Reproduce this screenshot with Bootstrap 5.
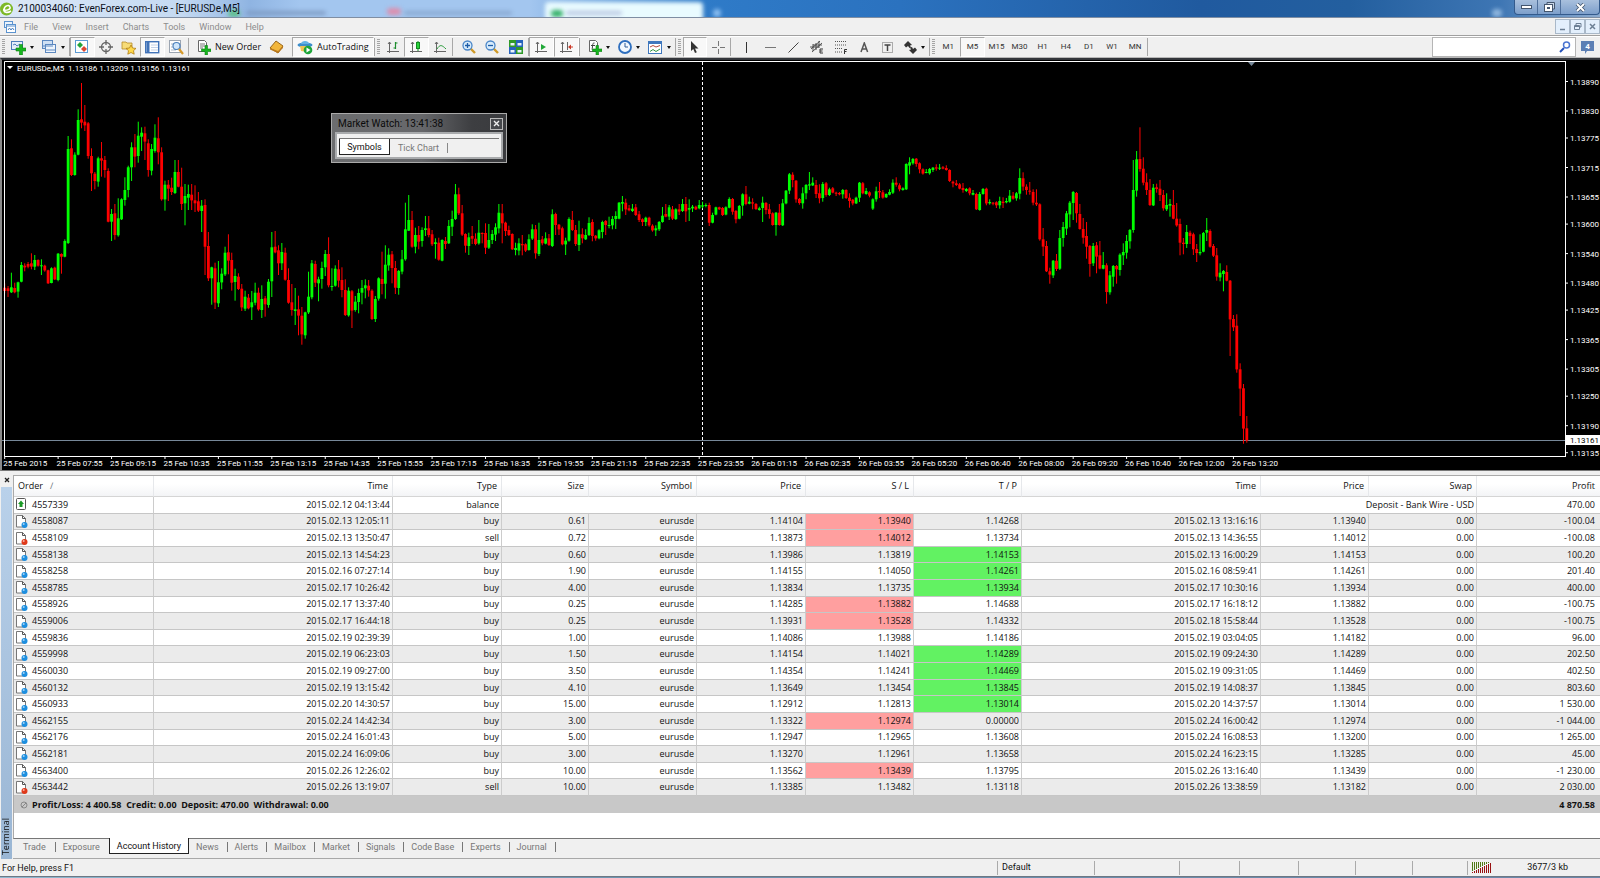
<!DOCTYPE html>
<html lang="en">
<head>
<meta charset="utf-8">
<meta name="viewport" content="width=device-width, initial-scale=1">
<title>2100034060: EvenForex.com-Live - [EURUSDe,M5]</title>
<link href="https://cdn.jsdelivr.net/npm/bootstrap@5.3.0/dist/css/bootstrap.min.css" rel="stylesheet">
<script src="https://cdn.jsdelivr.net/npm/bootstrap@5.3.0/dist/js/bootstrap.bundle.min.js"></script>
<style>
  :root { --ui: Roboto, "Open Sans", sans-serif; --data: "Open Sans", "Noto Sans", sans-serif; }
  body { font: 9px/12px var(--ui); color: #111; background: #f0f0f0; }
  button, input { font: inherit; color: inherit; border: 0; background: none; padding: 0; }
  svg { display: block; flex: none; }

  /* window caption */
  .caption-bar { height: 18px; overflow: hidden; border-bottom: 1px solid #7f8ea3;
    background: linear-gradient(90deg, #dbe8f7 0, #c5daf2 180px, #8fb4e2 250px, #a3c6ef 300px, #a3c6ef 530px, #2f7bc8 700px, #2b72bf 900px, #205a9f 1200px, #235f9f 1350px, #3e76b4 1500px, #8cabd0 1600px); }
  .caption-text { font: 10px/17px var(--ui); color: #0a0f18; }
  .glass-tab { top: 2px; height: 20px; border-radius: 4px; filter: blur(2px); }
  .win-btns { height: 15px; border: 1px solid #335a8c; border-top: 0; border-radius: 0 0 4px 4px; background: linear-gradient(#a9c0dd, #7d9fcb); }
  .win-btns button { width: 23px; border-right: 1px solid #50709c; }
  .win-btns button:last-child { width: 38px; border-right: 0; }

  /* menu */
  .menu-bar { height: 18px; border-bottom: 1px solid #a0a0a0; }
  .menu-items { gap: 14px; }
  .menu-bar a { color: #8c8c8c; text-decoration: none; }
  .mdi-btn { width: 15px; height: 15px; border: 1px solid #a9b8c8; background: #e3effc; }

  /* tool bar */
  .tool-bar { height: 22px; border-top: 1px solid #fff; border-bottom: 1px solid #b8b8b8; font-family: var(--data); }
  .grip { width: 3px; height: 16px; margin: 0 2px; background: repeating-linear-gradient(#a5a5a5 0 1px, transparent 1px 2px); }
  .rule { width: 1px; height: 18px; background: #a8a8a8; }
  .tool-bar button { height: 20px; display: flex; align-items: center; justify-content: center; }
  .tool-bar .pressed { background: #f8f8f8; border: 1px solid #fff; border-left-color: #a8a8a8; border-top-color: #a8a8a8; }
  .tools > button { flex: 1 1 0; }
  .drop::after { content: ""; border: 2px solid transparent; border-top: 3px solid #111; border-bottom: 0; margin-left: 4px; }
  .periods { width: 210px; font: 8px/12px var(--ui); color: #333; }
  .search-box { width: 144px; height: 20px; background: #fff; border: 1px solid #b5b5b5; }
  .search-box input { outline: 0; min-width: 0; }
  .msg-count { font: bold 8px/9px var(--ui); fill: #fff; }

  /* chart */
  .chart-pane { background: #000; height: 413px; border-top: 2px solid #33363b; border-bottom: 1px solid #777; border-left: 2px solid #8a8a8a; }
  .plot text, .scale-y text { font: 8px var(--ui); fill: #fff; }
  .plot { flex: 1 1 0; min-width: 0; height: 410px; }
  .scale-y { width: 35px; height: 410px; }
  .watch { left: 329px; top: 53px; width: 176px; height: 50px; border: 1px solid #aaa; background: linear-gradient(90deg, #6c6d6f 0, #66676a 90px, #3d3e41 140px, #3a3b3e); padding: 1px 3px 3px; }
  .watch-title { height: 17px; font: 10px/16px var(--ui); color: #0b0b0b; padding-left: 3px; }
  .watch-close { width: 13px; height: 12px; border: 1px solid #bbb; background: #46484c; }
  .watch-body { height: 27px; border: 2px solid #a9abad; background: #f0f0f0; padding: 2px; }
  .watch-tabs { border-top: 1px solid #777; margin-top: 2px; }
  .watch-tabs .on { border: 1px solid #222; border-top: 0; background: #fff; width: 51px; height: 16px; }
  .watch-tabs .off { color: #777; border-right: 1px solid #888; height: 10px; line-height: 10px; }

  /* terminal */
  .side { flex: 0 0 13px; }
  .side-strip { width: 11px; background: linear-gradient(#b9d1ea, #9ab6d4); }
  .side-strip span { writing-mode: vertical-rl; transform: rotate(180deg); font: 9px/10px var(--data); }
  .history { table-layout: fixed; height: 338px; border-collapse: separate; border-spacing: 0; font: 9px/12px var(--data); background: #fff; border-left: 1px solid #aaa; border-top: 1px solid #aaa; }
  .history th { font-weight: 400; text-align: right; height: 21px; padding: 0 4px; background: linear-gradient(#fff 40%, #f3f4f6); border-right: 1px solid #e6e8eb; border-bottom: 1px solid #d5d5d5; }
  .history th:first-child, .history td:first-child { text-align: left; }
  .history td { text-align: right; padding: 0 2px; border-right: 1px solid #ccc; border-bottom: 1px solid #c6c6c6; white-space: nowrap; }
  .history td:last-child, .history th:last-child { border-right: 0; padding-right: 5px; }
  .history tbody tr:nth-child(even) { background: #ebebeb; }
  .history td.loss { background: #ff9f9f; }
  .history td.gain { background: #62f262; }
  .history tfoot td { height: 17px; background: #c8c8c8; font-weight: 700; border-right: 0; border-bottom: 0; }
  .blank { height: 26px; background: #fff; border-left: 1px solid #aaa; border-bottom: 1px solid #777; }
  .term-tabs { height: 20px; padding-left: 3px; border-bottom: 1px solid #a8a8a8; }
  .term-tabs button { color: #777; height: 10px; line-height: 10px; border-right: 1px solid #777; padding: 0 9px 0 7px; margin-top: 3px; }
  .term-tabs button.on { color: #111; background: #fff; height: 16px; line-height: 16px; margin: -1px 0 0 -1px; padding: 0 7px; border: 1px solid #222; border-top: 0; }
  .term-tabs button.on ~ button { padding-right: 8px; }
  .state-bar { height: 18px; border-bottom: 1px solid #6d7884; }
  .state-bar > div { border-left: 1px solid #aaa; height: 14px; line-height: 13px; }
  .state-text { padding-left: 2px; }
  .desk { flex: 1 0 1px; background: linear-gradient(90deg, #8fb8cf, #6e93ae 40%, #6c86a8); }
</style>
</head>
<body class="min-vh-100 d-flex flex-column overflow-hidden">

<header class="caption-bar d-flex align-items-start position-relative">
  <div class="glass-tab position-absolute" style="left:545px;width:158px;background:#e9fbff"></div>
  <div class="glass-tab position-absolute" style="left:551px;width:12px;top:10px;height:7px;background:#35b06a"></div>
  <div class="glass-tab position-absolute" style="left:566px;width:56px;top:11px;height:4px;background:#b9c6e2"></div>
  <div class="glass-tab position-absolute" style="left:387px;width:14px;top:8px;height:7px;background:#dd8fae"></div>
  <div class="glass-tab position-absolute" style="left:404px;width:108px;top:11px;height:4px;background:#8aa8d0"></div>
  <div class="glass-tab position-absolute" style="left:228px;width:12px;top:10px;height:7px;background:#5fc08c"></div>
  <div class="glass-tab position-absolute" style="left:246px;width:80px;top:11px;height:4px;background:#7f9cc4"></div>
  <div class="glass-tab position-absolute" style="left:713px;width:8px;top:9px;height:8px;background:#8ec0f2"></div>
  <div class="glass-tab position-absolute" style="left:1492px;width:10px;top:9px;height:8px;background:#8fb6de"></div>
  <svg class="position-relative" width="14" height="17" viewBox="0 0 14 17"><circle cx="6.500" cy="9" r="6.500" fill="#7db928"/><path d="M3 10c4 1 8-1 7-3-1-3-6-1-6 3 0 3 4 3 7 1" fill="none" stroke="#fff" stroke-width="1.6"/></svg>
  <div class="caption-text position-relative ps-1 me-auto">2100034060: EvenForex.com-Live - [EURUSDe,M5]</div>
  <div class="win-btns d-flex position-relative">
    <button class="d-flex justify-content-center align-items-center" aria-label="Minimize"><svg width="11" height="5" viewBox="0 0 11 5"><rect x=".5" y=".5" width="10" height="3" fill="#fff" stroke="#44566e"/></svg></button>
    <button class="d-flex justify-content-center align-items-center" aria-label="Restore"><svg width="11" height="10" viewBox="0 0 11 10"><path d="M3 .5h7.500v6.500H3z" fill="#c9d5e5" stroke="#44566e"/><rect x=".5" y="2.500" width="8" height="7" fill="#fff" stroke="#44566e"/><rect x="3" y="5" width="3" height="2" fill="#44566e"/></svg></button>
    <button class="d-flex justify-content-center align-items-center" aria-label="Close"><svg width="11" height="9" viewBox="0 0 11 9"><path d="M2 1l7 7M9 1L2 8" stroke="#44566e" stroke-width="3.600"/><path d="M2 1l7 7M9 1L2 8" stroke="#fff" stroke-width="2"/></svg></button>
  </div>
</header>

<nav class="menu-bar d-flex align-items-center">
  <svg class="ms-1 me-2" width="12" height="12" viewBox="0 0 12 12"><rect x=".5" y=".5" width="8" height="6" fill="#eaf3fc" stroke="#5b93cf"/><rect x="2.500" y="3.500" width="9" height="8" fill="#fff" stroke="#5b93cf"/><path d="M3 5h8" stroke="#5b93cf"/><path d="M4 9l1.500-2L7 9l1.500-2L10 9" fill="none" stroke="#4880c0"/></svg>
  <div class="menu-items d-flex me-auto">
    <a href="#">File</a><a href="#">View</a><a href="#">Insert</a><a href="#">Charts</a><a href="#">Tools</a><a href="#">Window</a><a href="#">Help</a>
  </div>
  <button class="mdi-btn" aria-label="Minimize chart"><svg width="13" height="13" viewBox="0 0 13 13"><path d="M4 9.500h5" stroke="#6c7f94" stroke-width="1.500"/></svg></button>
  <button class="mdi-btn" aria-label="Restore chart"><svg width="13" height="13" viewBox="0 0 13 13"><path d="M5 5V3.500h5V7H8.500M3.500 5.500h5v4h-5zM3.500 6.500h5" fill="none" stroke="#6c7f94"/></svg></button>
  <button class="mdi-btn" aria-label="Close chart"><svg width="13" height="13" viewBox="0 0 13 13"><path d="M4 4l5 5M9 4L4 9" stroke="#6c7f94" stroke-width="1.500"/></svg></button>
</nav>

<div class="tool-bar d-flex align-items-center" id="toolbar">
  <i class="grip"></i>
  <div class="tools d-flex" style="width:62px">
    <button class="drop" aria-label="New chart"><svg width="15" height="15" viewBox="0 0 15 15"><rect x=".5" y="1.500" width="11" height="8" fill="#e4eefa" stroke="#4b7dbb"/><path d="M2 5l2-1 2 2 3-2" stroke="#4b7dbb" fill="none"/><path d="M8.500 4.500h3v3.500H15v3h-3.500V15h-3v-4H5V8h3.500z" fill="#17b51f" stroke="#0d8115" stroke-width=".6"/></svg></button>
    <button class="drop" aria-label="Profiles"><svg width="15" height="14" viewBox="0 0 15 14"><rect x=".5" y=".5" width="10" height="8" fill="#cfe0f4" stroke="#5c88c0"/><rect x="3.500" y="4.500" width="10" height="8" fill="#eef5fd" stroke="#5c88c0"/><path d="M1 6h10M4 10h9" stroke="#5c88c0"/></svg></button>
  </div>
  <i class="rule"></i>
  <div class="tools d-flex" style="width:118px">
    <button class="pressed" aria-label="Market Watch"><svg width="14" height="14" viewBox="0 0 14 14"><rect x=".5" y=".5" width="12" height="12" fill="#fff" stroke="#5b9bd5"/><path d="M2 5l3-3 3 3-3 3z" fill="#22a33a"/><path d="M6 9l3-3 3 3-3 3z" fill="#dd4630"/></svg></button>
    <button aria-label="Data Window"><svg width="14" height="14" viewBox="0 0 14 14"><circle cx="7" cy="7" r="4.500" fill="none" stroke="#666" stroke-width="1.300"/><path d="M7 0v5M7 9v5M0 7h5M9 7h5" stroke="#666" stroke-width="1.300"/></svg></button>
    <button aria-label="Navigator"><svg width="16" height="15" viewBox="0 0 16 15"><path d="M1 2h4l1 1h5v6H1z" fill="#f7dc78" stroke="#b58a2a" stroke-width=".8"/><path d="M10 5l1.500 3 3.500.4-2.500 2.300.7 3.500L10 12.500l-3.200 1.700.7-3.500L5 8.400 8.500 8z" fill="#ffd94a" stroke="#b07d12" stroke-width=".8"/></svg></button>
    <button class="pressed" aria-label="Terminal"><svg width="15" height="13" viewBox="0 0 15 13"><rect x=".7" y=".7" width="13" height="11" fill="#fff" stroke="#4173b8" stroke-width="1.400"/><path d="M1.500 1h3v10.500h-3z" fill="#4173b8"/><path d="M6 4h7M6 6.500h7M6 9h7" stroke="#c3d2e8"/></svg></button>
    <button aria-label="Strategy Tester"><svg width="15" height="15" viewBox="0 0 15 15"><rect x=".5" y=".5" width="11" height="12" fill="#fff" stroke="#9ba5b2"/><path d="M2 4h8M2 7h8M2 10h5" stroke="#a9b6c6"/><circle cx="7.500" cy="6" r="3.500" fill="#cfe6fb" stroke="#4d82be" stroke-width="1.200"/><path d="M10 9l4 5" stroke="#d69a2a" stroke-width="2.200"/></svg></button>
  </div>
  <i class="rule me-1"></i>
  <button class="px-1" aria-label="New Order"><svg class="me-1" width="14" height="15" viewBox="0 0 14 15"><path d="M1.500.5h6l2 2v9h-8z" fill="#fff" stroke="#666"/><path d="M3 4h5M3 6h5M3 8h3" stroke="#777"/><path d="M8 5.500h2.500V9H14v2.500h-3.500V15H8v-3.500H4.500V9H8z" fill="#17b51f" stroke="#0d8115" stroke-width=".6"/></svg>New Order</button>
  <button class="px-1" aria-label="MetaEditor"><svg width="15" height="14" viewBox="0 0 15 14"><path d="M1 8l6-7 7 5-5 7z" fill="#f2b63c" stroke="#97661b"/><path d="M1 8l8 3 5-5v2l-5 5-8-3.500z" fill="#b9791e"/></svg></button>
  <button class="pressed px-1 ms-1"><svg class="me-1" width="16" height="15" viewBox="0 0 16 15"><ellipse cx="8" cy="5" rx="7.500" ry="2.500" fill="#3d8ecb"/><path d="M4 4c0-4 8-4 8 0z" fill="#63b1e4"/><path d="M3 6h9l-2 6-6-1z" fill="#efc354"/><circle cx="11" cy="10" r="4.300" fill="#1ea63a"/><path d="M9.500 7.500l4 2.500-4 2.500z" fill="#fff"/></svg>AutoTrading</button>
  <i class="rule"></i><i class="grip"></i>
  <div class="tools d-flex" style="width:70px">
    <button aria-label="Bar chart"><svg width="13" height="13" viewBox="0 0 13 13"><path d="M2.500 1v11M0 10.500h12M1 3l1.500-2L4 3" stroke="#666" fill="none"/><path d="M8.500 1v7M8.500 2h2M6.500 7h2" stroke="#1c8c2c" stroke-width="1.200"/></svg></button>
    <button class="pressed" aria-label="Candlesticks"><svg width="13" height="13" viewBox="0 0 13 13"><path d="M2.500 1v11M0 10.500h12M1 3l1.500-2L4 3" stroke="#666" fill="none"/><path d="M8 0v10" stroke="#138a22"/><rect x="6.500" y="1.500" width="3" height="6" fill="#28d53a" stroke="#138a22"/></svg></button>
    <button aria-label="Line chart"><svg width="13" height="13" viewBox="0 0 13 13"><path d="M2.500 1v11M0 10.500h12M1 3l1.500-2L4 3" stroke="#666" fill="none"/><path d="M3 8c3-5 5-4 9 0" stroke="#2b9c3c" fill="none"/></svg></button>
  </div>
  <i class="rule"></i>
  <div class="tools d-flex ms-1" style="width:71px">
    <button aria-label="Zoom in"><svg width="14" height="14" viewBox="0 0 14 14"><path d="M8 8l5 5" stroke="#cf9a28" stroke-width="2.400"/><circle cx="5.500" cy="5.500" r="4.500" fill="#d8ecfc" stroke="#4a86c8" stroke-width="1.300"/><path d="M3 5.500h5M5.500 3v5" stroke="#1d5da8" stroke-width="1.300"/></svg></button>
    <button aria-label="Zoom out"><svg width="14" height="14" viewBox="0 0 14 14"><path d="M8 8l5 5" stroke="#cf9a28" stroke-width="2.400"/><circle cx="5.500" cy="5.500" r="4.500" fill="#d8ecfc" stroke="#4a86c8" stroke-width="1.300"/><path d="M3 5.500h5" stroke="#1d5da8" stroke-width="1.300"/></svg></button>
    <button aria-label="Tile windows"><svg width="14" height="14" viewBox="0 0 14 14"><path d="M0 0h7v7H0zM7 7h7v7H7z" fill="#2f9a28"/><path d="M7 0h7v7H7zM0 7h7v7H0z" fill="#2763bd"/><path d="M1.500 3h4v2.500h-4zM8.500 3h4v2.500h-4zM1.500 10h4v2.500h-4zM8.500 10h4v2.500h-4z" fill="#e9f2fb"/></svg></button>
  </div>
  <i class="rule"></i>
  <div class="tools d-flex" style="width:50px">
    <button class="pressed" aria-label="Auto scroll"><svg width="13" height="13" viewBox="0 0 13 13"><path d="M2.500 1v11M0 10.500h12M1 3l1.500-2L4 3" stroke="#666" fill="none"/><path d="M6 3l5 3-5 3z" fill="#22a838"/></svg></button>
    <button class="pressed" aria-label="Chart shift"><svg width="13" height="13" viewBox="0 0 13 13"><path d="M2.500 1v11M0 10.500h12M1 3l1.500-2L4 3M7.500 1v8" stroke="#666" fill="none"/><path d="M8 6l3-2.500v5zM11 5.500h2v1h-2z" fill="#cc3a28"/></svg></button>
  </div>
  <i class="rule"></i>
  <div class="tools d-flex ms-1" style="width:91px">
    <button class="drop" aria-label="Indicators"><svg width="14" height="15" viewBox="0 0 14 15"><path d="M1.500.5h6l2 2v9h-8z" fill="#fff" stroke="#666"/><path d="M6.500 3C4 2.500 5 6 4 9.500M3 5.500h4" stroke="#444" fill="none"/><path d="M8 5.500h2.500V9H14v2.500h-3.500V15H8v-3.500H4.500V9H8z" fill="#17b51f" stroke="#0d8115" stroke-width=".6"/></svg></button>
    <button class="drop" aria-label="Periodicity"><svg width="14" height="14" viewBox="0 0 14 14"><circle cx="7" cy="7" r="6" fill="#f1f8ff" stroke="#2e6fbf" stroke-width="1.800"/><path d="M7 3v4h3" stroke="#2e5d96" fill="none"/></svg></button>
    <button class="drop" aria-label="Templates"><svg width="15" height="13" viewBox="0 0 15 13"><rect x=".5" y=".5" width="13" height="12" fill="#fff" stroke="#3f77bd"/><path d="M1 2h12" stroke="#3f77bd" stroke-width="2"/><path d="M2 6l3-1.500 3 1.500 4-1.500" stroke="#b34a3b" fill="none"/><path d="M2 10.500l3-2 3 2 4-2.500" stroke="#2f9643" fill="none"/></svg></button>
  </div>
  <i class="rule"></i><i class="grip"></i>
  <div class="tools d-flex" style="width:47px">
    <button class="pressed" aria-label="Cursor"><svg width="9" height="13" viewBox="0 0 9 13"><path d="M1 0v10l2.300-2 1.700 4 1.800-.8L5 7.500h3.500z" fill="#333"/></svg></button>
    <button aria-label="Crosshair"><svg width="13" height="13" viewBox="0 0 13 13"><path d="M6.500 0v5M6.500 8v5M0 6.500h5M8 6.500h5" stroke="#777"/></svg></button>
  </div>
  <i class="rule"></i>
  <div class="tools d-flex ms-1" style="width:165px">
    <button aria-label="Vertical line"><svg width="13" height="13" viewBox="0 0 13 13"><path d="M6.500 1v11" stroke="#333"/></svg></button>
    <button aria-label="Horizontal line"><svg width="13" height="13" viewBox="0 0 13 13"><path d="M1 6.500h11" stroke="#777"/></svg></button>
    <button aria-label="Trendline"><svg width="13" height="13" viewBox="0 0 13 13"><path d="M1.500 11.500l10-10" stroke="#444"/></svg></button>
    <button aria-label="Equidistant channel"><svg width="14" height="14" viewBox="0 0 14 14"><path d="M1 9l9-8M2 12l10-9M3 4v7M6 3v7M9 1v7M0 7h9M3 5h9" stroke="#444" stroke-width=".9"/><path d="M13 9h-3v4h3M10 11h2.500" stroke="#333" fill="none"/></svg></button>
    <button aria-label="Fibonacci retracement"><svg width="14" height="14" viewBox="0 0 14 14"><path d="M1 1.500h12M1 5h12M1 8.500h8M1 12h7" stroke="#555" stroke-dasharray="1 1"/><path d="M10.500 14V9.500H13M10.500 11.500h2" stroke="#333" fill="none"/></svg></button>
    <button aria-label="Text"><svg width="9" height="11" viewBox="0 0 9 11"><path d="M1 10l3.300-9 3.300 9M2.300 7h4" stroke="#555" stroke-width="1.500" fill="none"/></svg></button>
    <button aria-label="Text label"><svg width="13" height="13" viewBox="0 0 13 13"><rect x="1.500" y="1.500" width="10" height="10" fill="none" stroke="#666" stroke-dasharray="1 1"/><path d="M3.500 4h6M6.500 4v6" stroke="#444" stroke-width="1.500"/></svg></button>
  </div>
  <button class="drop px-1" aria-label="Arrows"><svg width="13" height="13" viewBox="0 0 13 13"><path d="M4 0l4 4-2 .5 1 2-1.500.5L4 5 2 6.500 0 4z" fill="#333"/><path d="M9 13L5 9l2-.5L6 6.500 8 6l1 2 2-1.500L13 9z" fill="#333"/></svg></button>
  <i class="rule"></i><i class="grip"></i>
  <div class="tools periods d-flex">
    <button>M1</button><button class="pressed">M5</button><button>M15</button><button>M30</button><button>H1</button><button>H4</button><button>D1</button><button>W1</button><button>MN</button>
  </div>
  <i class="rule"></i>
  <div class="search-box d-flex align-items-center ms-auto">
    <input class="flex-fill" type="text" aria-label="Search">
    <svg class="me-1" width="12" height="12" viewBox="0 0 12 12"><path d="M5 7l-4 4" stroke="#2450b8" stroke-width="2"/><circle cx="7.500" cy="4" r="3" fill="#fff" stroke="#4b76d2" stroke-width="1.500"/></svg>
  </div>
  <button class="px-1" aria-label="Messages"><svg width="16" height="14" viewBox="0 0 16 14"><path d="M1 1h13v10H7l-2 3v-3H1z" fill="#5c7fb4"/><text class="msg-count" x="7.500" y="9" text-anchor="middle">4</text></svg></button>
</div>

<main class="chart-pane d-flex position-relative">
  <svg class="plot" id="plot" aria-label="EURUSDe M5 chart"></svg>
  <svg class="scale-y" id="scale"></svg>
  <section class="watch position-absolute">
    <div class="watch-title d-flex align-items-center justify-content-between"><span>Market Watch: 13:41:38</span>
      <button class="watch-close d-flex align-items-center justify-content-center" aria-label="Close Market Watch"><svg width="7" height="7" viewBox="0 0 7 7"><path d="M1 1l5 5M6 1L1 6" stroke="#eee" stroke-width="1.400"/></svg></button></div>
    <div class="watch-body"><div class="watch-tabs d-flex"><button class="on">Symbols</button><button class="off px-2 mt-1">Tick Chart</button></div></div>
  </section>
</main>

<section class="d-flex pt-1">
  <aside class="side d-flex flex-column align-items-center">
    <button class="d-flex" aria-label="Close terminal"><svg width="10" height="12" viewBox="0 0 10 12"><path d="M3 3l4 4M7 3L3 7" stroke="#222" stroke-width="1.300"/></svg></button>
    <div class="side-strip flex-fill d-flex align-items-end pb-1"><span>Terminal</span></div>
  </aside>
  <div class="flex-fill">
    <table class="history w-100">
      <colgroup id="cols"></colgroup>
      <thead><tr id="head"></tr></thead>
      <tbody id="rows"></tbody>
      <tfoot><tr><td colspan="11"><div class="d-flex align-items-center"><svg class="ms-1 me-1" width="8" height="8" viewBox="0 0 8 8"><circle cx="4" cy="4" r="3" fill="none" stroke="#888"/><path d="M2 6l4-4" stroke="#888"/></svg><span>Profit/Loss: 4 400.58 &nbsp;Credit: 0.00 &nbsp;Deposit: 470.00 &nbsp;Withdrawal: 0.00</span></div></td><td>4 870.58</td></tr></tfoot>
    </table>
    <div class="blank"></div>
    <div class="term-tabs d-flex align-items-start">
      <button>Trade</button><button>Exposure</button><button class="on">Account History</button><button>News</button><button>Alerts</button><button>Mailbox</button><button>Market</button><button>Signals</button><button>Code Base</button><button>Experts</button><button>Journal</button>
    </div>
  </div>
</section>

<footer class="state-bar d-flex align-items-center position-relative">
  <span class="state-text flex-fill">For Help, press F1</span>
  <div class="ps-1" style="width:97px">Default</div>
  <div style="width:85px"></div><div style="width:60px"></div><div style="width:59px"></div><div style="width:57px"></div><div style="width:57px"></div><div style="width:55px"></div>
  <div class="d-flex align-items-center ps-1" style="width:133px"><svg id="bars" width="21" height="11" viewBox="0 0 21 11"></svg><span class="ms-auto pe-4 me-2">3677/3 kb</span></div>
</footer>
<div class="desk"></div>

<script>
// Candles: high, body top, body bottom, low in thirds of a pixel; a leading "g" rises, "r" falls.
const series = [
 [0, `r670 683 693 700,r678 685 693 711,g638 682 697 699,r668 684 697 700,g665 667 695 713,g606 615 665 667,r610 617 622 634,r606 612 620 625,r580 610 620 628,g585 600 620 630,r598 600 617 620,g598 616 619 645,r614 617 631 635,r629 631 670 672,g622 625 669 670,r620 623 658 660,g579 581 660 664,r580 582 590 641,g538 543 590 592,g228 267 549 552,r238 265 345 348,g277 284 345 347,g148 180 284 286,r69 178 188 205,r135 185 196 213,r186 190 288 296,r265 288 340 393,r336 341 363 388,g290 295 365 380,r246 295 302 350,r288 300 330 353,r325 333 485 487,g447 462 485 543,r432 460 525 539,g415 475 526 530,g415 418 478 480,g352 390 420 437,g317 322 390 412,g247 262 322 363,r222 262 290 322,g185 227 288 308,g202 218 230 273,r200 220 245 300,r238 250 330 350,g252 267 332 346,g193 233 273 278,r172 235 277 313,r262 277 418 422,g362 374 418 452,r360 374 386 423,r353 383 396 405,g300 336 399 402,r300 336 380 382,r323 380 432 450,g372 408 430 496,g374 402 413 450,r372 404 421 450,r376 421 430 456,r396 424 452 456,g420 437 453 516,r418 435 560 645,r516 558 655 663,g620 622 655 734,r608 625 728 747,g603 667 730 741,g625 641 667 688,g560 578 643 648,r523 577 602 643,r578 600 668 692,g626 648 666 722,r640 650 687 690,r672 686 742 753,g692 710 746 753,r702 713 745 748,g693 727 742 780,g668 698 728 736,r683 698 748 752,g676 717 750 774,r708 715 733 770,g657 665 735 743,g516 562 664 711,r513 560 577 580,r556 571 610 645,g549 576 610 630,r563 578 659 662,r625 660 728 731,r672 727 750 767,g684 748 753 795,r707 748 767 826,r741 767 823 854,g755 757 826 836,g635 710 757 762,g600 610 712 718,r602 612 668 681,g650 658 670 724,g605 624 657 686,g570 582 622 648,r532 582 676 682,g625 678 680 692,g616 626 677 680,r600 628 662 682,r622 660 690 712,r658 690 765 768,g682 692 766 770,r690 694 752 804,g708 725 750 755,g686 699 726 760,g660 684 698 733,g658 676 685 715,r660 677 691 710,r688 692 777 780,g708 717 777 786,g652 655 716 722,r575 657 672 703,g556 614 671 716,g565 584 616 632,r573 583 624 670,r603 624 683 702,g630 633 684 704,g570 598 635 643,g428 508 598 602,g405 480 512 513,r453 480 560 563,g503 525 560 580,r498 525 545 568`],
 [120, `g382 390 423 440,g348 385 390 408,r348 385 405 412,r390 403 433 438,g415 427 432 476,r413 428 479 482,g418 420 482 484,r411 423 432 447,g360 378 430 432,g332 357 380 408,g252 283 357 360,r263 283 340 345,r315 340 404 408,r400 402 437 458,g398 412 438 465,r378 408 416 432,r400 416 432 436,g360 398 430 434,r397 399 402 430,r370 399 443 462,g372 420 443 447,g390 402 420 432,g370 382 404 423,g312 338 385 400,r312 340 370 430,r365 368 393 408,r377 390 405 408,r400 402 448 450,g428 444 450 466,g415 430 452 466,r405 432 436 466,r430 433 452 456,g403 418 450 452,g373 388 416 420,r375 388 460 476,g368 420 462 468,r408 418 430 436,g397 415 431 433,r402 415 435 438,g328 343 438 441,r338 342 375 405,r372 374 388 405,r380 385 433 436,g413 422 433 465,g352 357 422 425,r333 360 390 393,r375 390 432 438,g362 403 435 453,r385 403 415 430,g388 405 418 420,g352 369 405 408,r358 366 408 424,r405 407 415 422,g388 391 415 418,g362 366 396 415,r360 363 375 405,g350 375 377 385,g348 357 376 388,g334 348 357 387,g306 308 356 358,g288 306 311 334,r296 308 328 345,r315 325 331 334,g312 326 333 336,r312 322 345 348,r333 343 360 366,r355 358 366 378,g350 353 366 378,r350 353 376 380,r373 377 391 395,g376 385 391 408,g363 366 388 393,g321 347 366 368,r312 342 350 352,g315 322 350 360,r318 328 356 360,g325 328 357 360,r312 328 335 345,g297 312 333 336,r291 312 334 366,g298 324 329 363,g315 320 325 336,r317 320 328 330,g300 315 325 328,g305 316 320 325,g310 315 318 322,r308 315 368 378,g338 345 368 370,g320 322 344 346,r320 322 328 330`],
 [210, `r231 234 255 258,g229 232 254 256,g202 207 233 235,r204 207 245 254,r240 243 268 280,g225 228 266 268,g190 193 227 257,r168 193 222 226,g200 215 221 223,r205 217 221 238,r219 222 237 240,g230 235 240 242,g200 218 234 276,r216 219 240 253,r222 238 252 266,r247 250 285 287,g246 248 285 317,r222 248 285 287,g207 220 286 288,g180 182 220 223,g129 133 182 192,r127 134 150 172,r150 152 208 218,r204 207 219 224,g172 190 220 236,g162 165 190 208,g126 163 167 180,g142 158 166 168,r150 165 192 204,r163 190 205 220,g156 162 204 215,r156 160 195 200,g173 178 195 198,r171 175 188 190,r185 188 191 198,r186 189 193 196,g177 180 193 206,r178 180 204 207,r190 203 213 233,r207 209 220 226,g200 203 220 222,g156 158 203 216,r156 160 190 193,g174 183 192 194,r184 187 197 202,g205 208 236 240,g170 184 208 215,r156 183 187 204,r180 187 203 206,g190 192 202 204,g178 186 194 196,g148 158 188 192,r142 158 164 170,r160 166 178 184,g172 175 180 182,g100 102 178 180,g82 97 107 133,g84 87 100 104,r84 86 102 110,r97 100 118 130,r115 118 131 134,g117 126 128 130,g114 117 130 134,g111 113 120 126,r103 112 116 122,g102 113 116 120,r108 112 116 118,r106 114 120 122,r118 120 153 156,r152 155 160 172,r150 160 165 168,r159 163 176 178,r159 174 180 188,g174 177 183 186,r172 175 190 196,g180 189 194 196,r188 192 238 240,g186 192 240 242,g174 177 192 194,r173 176 220 226,g208 216 220 224,r216 218 221 226,r214 217 226 234,g200 213 226 236,r202 215 219 234,g204 213 217 220,g180 197 215 218,r186 197 206 209,g186 190 205 212,g115 144 191 208,r127 145 170 182,r163 170 180 194,r156 182 185 194,r178 186 218 226,r178 218 223 228,r220 223 328 332,r294 328 350 378,r333 348 424 426,r413 424 434 461,g390 392 436 444,r372 392 417 423,g300 324 416 420,g276 291 324 350,g243 250 296 315,g213 218 253 292,g183 186 219 270,r186 189 250 278,r222 252 297 299,r264 297 323 341,r276 318 350 386,r345 348 402 440,g339 348 400 408,r336 346 380 430,r333 376 416 418,g366 405 416 418,r400 406 486 521,g423 436 487 494,g405 408 440 470,r405 408 418 461,g370 374 420 437,g340 366 376 405,g315 333 368 386,g297 300 334 356,g90 180 300 308,g63 88 182 200,r-8 87 117 125,r82 116 158 166,r130 157 180 195`],
 [120, `r237 270 315 318,g252 263 316 318,r251 262 267 278,r240 266 285 303,r270 285 325 332,g280 315 328 333,g297 312 317 350,r270 315 356 358,r309 356 376 380,r356 372 428 466,r414 428 432 463,g375 396 432 444,r392 398 408 432,r398 403 448 465,r432 447 459 486,g403 456 460 466,g396 399 455 457,g354 390 398 423,r388 393 440 443,r432 438 467 471,r444 466 530 542,g490 518 532 544,g510 513 522 574,r496 516 542 544,r540 542 658 768,r645 657 682 693,r643 677 808 818,r790 808 866 948,r852 865 986 1031,r948 985 1022 1028`]
];
const pitch = 3.339, x0 = 2.7;
let n = 0, out = '';
for (const [base, list] of series) for (const c of list.split(',')) {
  const col = c[0] === 'g' ? '#00ff00' : '#ff0000';
  const [h, t, b, l] = c.slice(1).split(' ').map(v => (+v + base) / 3);
  const x = x0 + pitch * n++;
  out += `<path d="M${x.toFixed(2)} ${h.toFixed(1)}V${l.toFixed(1)}" stroke="${col}" stroke-width="1"/><rect x="${(x - 1.4).toFixed(2)}" y="${t.toFixed(1)}" width="2.8" height="${Math.max(1, b - t).toFixed(1)}" fill="${col}"/>`;
}
const times = ['25 Feb 2015','25 Feb 07:55','25 Feb 09:15','25 Feb 10:35','25 Feb 11:55','25 Feb 13:15','25 Feb 14:35','25 Feb 15:55','25 Feb 17:15','25 Feb 18:35','25 Feb 19:55','25 Feb 21:15','25 Feb 22:35','25 Feb 23:55','26 Feb 01:15','26 Feb 02:35','26 Feb 03:55','26 Feb 05:20','26 Feb 06:40','26 Feb 08:00','26 Feb 09:20','26 Feb 10:40','26 Feb 12:00','26 Feb 13:20'];
times.forEach((t, i) => {
  const x = x0 + pitch * 16 * i;
  out += `<path d="M${x} 396v3" stroke="#fff"/><text x="${x - 1.5}" y="406">${t}</text>`;
});
document.getElementById('plot').innerHTML =
  `<path d="M0 380.500H2000" stroke="#778899"/><path d="M700.500 2V396" stroke="#fff" stroke-dasharray="3 2"/>` + out +
  `<path d="M2.500 396V1.500H2000M2.500 396.500H2000" fill="none" stroke="#fff"/>
   <path d="M5 6h6l-3 3z" fill="#fff"/><text x="15" y="11" xml:space="preserve">EURUSDe,M5  1.13186 1.13209 1.13156 1.13161</text>
   <path d="M1246 2h7l-3.500 4z" fill="#778899"/>`;

const prices = [1.13890,1.13830,1.13775,1.13715,1.13655,1.13600,1.13540,1.13480,1.13425,1.13365,1.13305,1.13250,1.13190,1.13135];
const py = p => 51 + (1.13830 - p) * 49170;
document.getElementById('scale').innerHTML = '<path d="M.5 1V397" stroke="#fff"/>' +
  prices.map(p => `<path d="M0 ${py(p).toFixed(1)}h3" stroke="#fff"/><text x="5" y="${(py(p) + 3).toFixed(1)}">${p.toFixed(5)}</text>`).join('') +
  '<rect x="1" y="375" width="34" height="10" fill="#fff"/><text x="5" y="383" style="fill:#000">1.13161</text>';

const widths = [140,239,109,87,108,109,108,108,239,108,108];
document.getElementById('cols').innerHTML = widths.map(w => `<col style="width:${w}px">`).join('') + '<col>';
document.getElementById('head').innerHTML = ['Order &nbsp; <span class="text-secondary">∕</span>','Time','Type','Size','Symbol','Price','S / L','T / P','Time','Price','Swap','Profit'].map(h => `<th scope="col">${h}</th>`).join('');
const rows = `4558087|2015.02.13 12:05:11|buy|0.61|1.14104|-1.13940|1.14268|2015.02.13 13:16:16|1.13940|-100.04
4558109|2015.02.13 13:50:47|sell|0.72|1.13873|-1.14012|1.13734|2015.02.13 14:36:55|1.14012|-100.08
4558138|2015.02.13 14:54:23|buy|0.60|1.13986|1.13819|+1.14153|2015.02.13 16:00:29|1.14153|100.20
4558258|2015.02.16 07:27:14|buy|1.90|1.14155|1.14050|+1.14261|2015.02.16 08:59:41|1.14261|201.40
4558785|2015.02.17 10:26:42|buy|4.00|1.13834|1.13735|+1.13934|2015.02.17 10:30:16|1.13934|400.00
4558926|2015.02.17 13:37:40|buy|0.25|1.14285|-1.13882|1.14688|2015.02.17 16:18:12|1.13882|-100.75
4559006|2015.02.17 16:44:18|buy|0.25|1.13931|-1.13528|1.14332|2015.02.18 15:58:44|1.13528|-100.75
4559836|2015.02.19 02:39:39|buy|1.00|1.14086|1.13988|1.14186|2015.02.19 03:04:05|1.14182|96.00
4559998|2015.02.19 06:23:03|buy|1.50|1.14154|1.14021|+1.14289|2015.02.19 09:24:30|1.14289|202.50
4560030|2015.02.19 09:27:00|buy|3.50|1.14354|1.14241|+1.14469|2015.02.19 09:31:05|1.14469|402.50
4560132|2015.02.19 13:15:42|buy|4.10|1.13649|1.13454|+1.13845|2015.02.19 14:08:37|1.13845|803.60
4560933|2015.02.20 14:30:57|buy|15.00|1.12912|1.12813|+1.13014|2015.02.20 14:37:57|1.13014|1 530.00
4562155|2015.02.24 14:42:34|buy|3.00|1.13322|-1.12974|0.00000|2015.02.24 16:00:42|1.12974|-1 044.00
4562176|2015.02.24 16:01:43|buy|5.00|1.12947|1.12965|1.13608|2015.02.24 16:08:53|1.13200|1 265.00
4562181|2015.02.24 16:09:06|buy|3.00|1.13270|1.12961|1.13658|2015.02.24 16:23:15|1.13285|45.00
4563400|2015.02.26 12:26:02|buy|10.00|1.13562|-1.13439|1.13795|2015.02.26 13:16:40|1.13439|-1 230.00
4563442|2015.02.26 13:19:07|sell|10.00|1.13385|1.13482|1.13118|2015.02.26 13:38:59|1.13182|2 030.00`.split('\n').map(r => r.split('|'));
const first = (icon, id) => `<td><div class="d-flex align-items-center">${icon}<span>${id}</span></div></td>`;
const page = dot => `<svg class="me-1" width="12" height="13" viewBox="0 0 12 13"><path d="M.5.5h6l3 3v8.500h-9z" fill="#fff" stroke="#777"/><path d="M6.500.5v3h3" fill="none" stroke="#555"/><circle cx="8.500" cy="10" r="3" fill="${dot}"/><circle cx="7.700" cy="9" r="1" fill="#fff" opacity=".6"/></svg>`;
const deposit = `<svg class="me-1" width="12" height="13" viewBox="0 0 12 13"><rect x=".5" y=".5" width="9" height="11" rx="1" fill="#fff" stroke="#555"/><path d="M5 2.500L8 6H6.500v3h-3V6H2z" fill="#1c9a26"/></svg>`;
const mark = (v, s, k) => v[0] === s ? `<td class="${k}">${v.slice(1)}</td>` : `<td>${v}</td>`;
document.getElementById('rows').innerHTML =
  `<tr>${first(deposit, '4557339')}<td>2015.02.12 04:13:44</td><td>balance</td><td colspan="8">Deposit - Bank Wire - USD</td><td>470.00</td></tr>` +
  rows.map(r => `<tr>${first(page(r[2] === 'buy' ? '#1d8fe0' : '#e0391a'), r[0])}<td>${r[1]}</td><td>${r[2]}</td><td>${r[3]}</td><td>eurusde</td><td>${r[4]}</td>${mark(r[5], '-', 'loss')}${mark(r[6], '+', 'gain')}<td>${r[7]}</td><td>${r[8]}</td><td>0.00</td><td>${r[9]}</td></tr>`).join('');

let bars = '';
for (let i = 0; i < 10; i++) bars += `<path d="M${i * 2 + .5} 0v${9 - i}" stroke="#4f7a14" stroke-width="1"/><path d="M${i * 2 + .5} ${10 - i}V11" stroke="#981010" stroke-width="1"/>`;
document.getElementById('bars').innerHTML = bars;
</script>
</body>
</html>
